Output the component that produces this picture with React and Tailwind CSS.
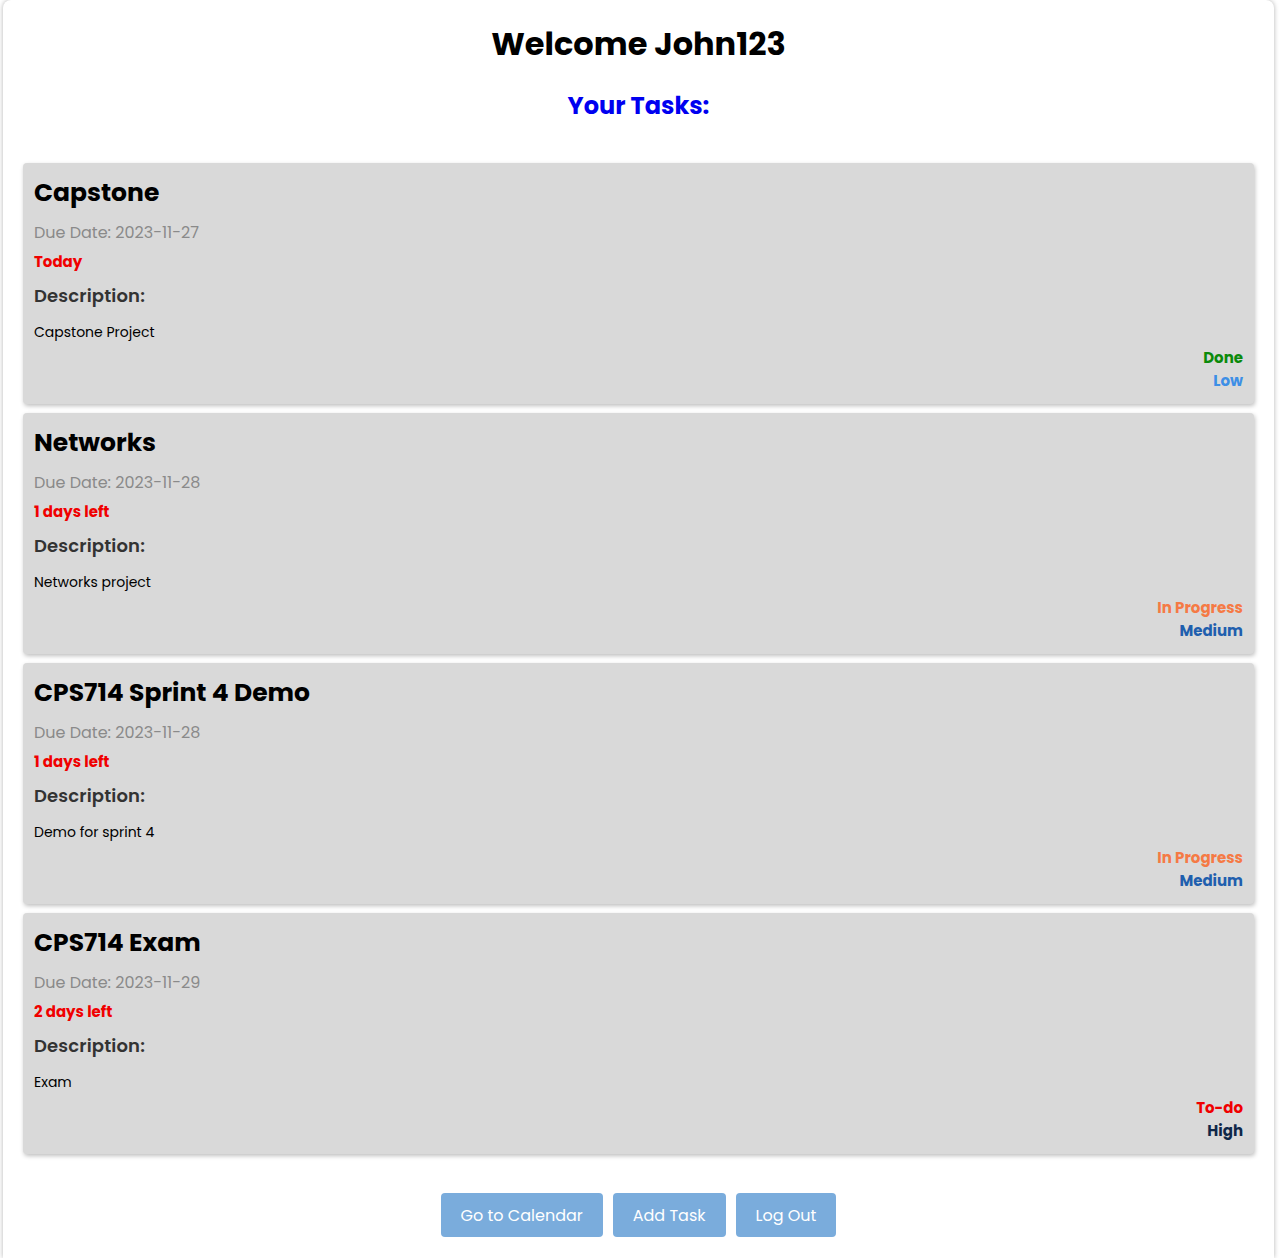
import React from "react";

const tasks = [
  {
    title: "Capstone",
    due: "2023-11-27",
    left: "Today",
    desc: "Capstone Project",
    status: "Done",
    statusClass: "text-[#0b8a0b]",
    priority: "Low",
    priorityClass: "text-[#3d8fe6]",
  },
  {
    title: "Networks",
    due: "2023-11-28",
    left: "1 days left",
    desc: "Networks project",
    status: "In Progress",
    statusClass: "text-[#f57a45]",
    priority: "Medium",
    priorityClass: "text-[#1f5fae]",
  },
  {
    title: "CPS714 Sprint 4 Demo",
    due: "2023-11-28",
    left: "1 days left",
    desc: "Demo for sprint 4",
    status: "In Progress",
    statusClass: "text-[#f57a45]",
    priority: "Medium",
    priorityClass: "text-[#1f5fae]",
  },
  {
    title: "CPS714 Exam",
    due: "2023-11-29",
    left: "2 days left",
    desc: "Exam",
    status: "To-do",
    statusClass: "text-[#f00000]",
    priority: "High",
    priorityClass: "text-[#0f2748]",
  },
];

export default function App() {
  return (
    <div
      className="min-h-screen bg-white"
      style={{ fontFamily: "Poppins, Inter, 'Noto Sans', sans-serif" }}
    >
      <div className="ml-[3px] mr-[6px] rounded-t-lg bg-white shadow-[0_0_5px_rgba(0,0,0,0.3)] px-[20px] pt-[20px] pb-[21px] min-h-[1258px]">
        <h1 className="text-center text-[32px] leading-[48px] font-bold text-black">
          Welcome John123
        </h1>
        <h2 className="mt-[20px] mb-[39px] text-center text-[24px] leading-[36px] font-bold text-[#0000f0]">
          Your Tasks:
        </h2>

        <div className="flex flex-col gap-[9px]">
          {tasks.map((t) => (
            <div
              key={t.title}
              className="rounded-[4px] bg-[#d9d9d9] shadow-[1px_2px_4px_rgba(0,0,0,0.25)] px-[11px] pt-[12px] pb-[13px]"
            >
              <h3 className="text-[25px] leading-[36px] font-bold text-black">
                {t.title}
              </h3>
              <p className="mt-[10px] text-[16px] leading-[24px] text-[#8a8a8a]">
                Due Date: {t.due}
              </p>
              <p className="mt-[7px] text-[15px] leading-[20px] font-bold text-[#f00000]">
                {t.left}
              </p>
              <p className="mt-[10px] text-[18px] leading-[28px] font-semibold text-[#333333] tracking-[0.15px]">
                Description:
              </p>
              <p className="mt-[12px] text-[14px] leading-[20px] text-black">
                {t.desc}
              </p>
              <p
                className={`mt-[6px] text-right text-[15px] leading-[20px] font-bold ${t.statusClass}`}
              >
                {t.status}
              </p>
              <p
                className={`mt-[3px] text-right text-[15px] leading-[20px] font-bold ${t.priorityClass}`}
              >
                {t.priority}
              </p>
            </div>
          ))}
        </div>

        <div className="mt-[39px] flex justify-center gap-[10px]">
          <button className="h-[44px] rounded-[4px] bg-[#7aacdc] px-[20px] pt-[2px] text-[16px] text-white">
            Go to Calendar
          </button>
          <button className="h-[44px] rounded-[4px] bg-[#7aacdc] px-[20px] pt-[2px] text-[16px] text-white">
            Add Task
          </button>
          <button className="h-[44px] rounded-[4px] bg-[#7aacdc] px-[20px] pt-[2px] text-[16px] text-white">
            Log Out
          </button>
        </div>
      </div>
    </div>
  );
}
